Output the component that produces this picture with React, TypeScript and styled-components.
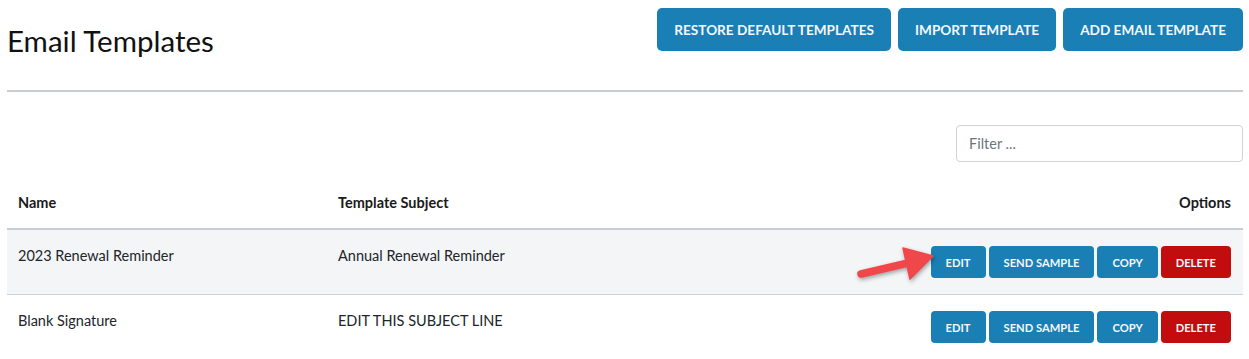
import React, { useState } from "react";
import styled, { createGlobalStyle } from "styled-components";

const GlobalStyle = createGlobalStyle`
  body {
    margin: 0;
    background: #fff;
    font-family: Lato, "Noto Sans", sans-serif;
    color: #212529;
  }
`;

const Page = styled.div`
  padding: 0 6px 0 7px;
`;

const Header = styled.header`
  height: 82px;
  padding-top: 8px;
  display: flex;
  justify-content: space-between;
  align-items: flex-start;
  border-bottom: 2px solid #c9cdd2;
`;

const Title = styled.h1`
  margin: 15px 0 0;
  font-size: 29.5px;
  font-weight: 400;
  line-height: 1.2;
  color: #111;
`;

const Actions = styled.div`
  display: flex;
  gap: 7px;
`;

const Button = styled.button<{ $size?: "lg" | "sm"; $danger?: boolean }>`
  border: 0;
  border-radius: ${(p) => (p.$size === "sm" ? "4px" : "5px")};
  background: ${(p) => (p.$danger ? "#c20d0e" : "#1a7fb5")};
  color: #f4f7fa;
  font-family: Lato, "Noto Sans", sans-serif;
  font-weight: 700;
  text-transform: uppercase;
  cursor: pointer;
  white-space: nowrap;
  height: ${(p) => (p.$size === "sm" ? "32px" : "43px")};
  padding: ${(p) => (p.$size === "sm" ? "0 15px" : "0 17px")};
  font-size: ${(p) => (p.$size === "sm" ? "11.2px" : "13.6px")};
`;

const FilterRow = styled.div`
  display: flex;
  justify-content: flex-end;
  padding: 33px 0 20px;
`;

const FilterInput = styled.input`
  width: 287px;
  height: 37px;
  box-sizing: border-box;
  border: 1px solid #cfd2d6;
  border-radius: 4px;
  padding: 0 12px;
  font-family: Lato, "Noto Sans", sans-serif;
  font-size: 14.5px;
  color: #212529;
  outline: none;
  &::placeholder {
    color: #6c757d;
  }
`;

const Table = styled.table`
  width: 100%;
  border-collapse: collapse;
  table-layout: fixed;
  font-size: 14.5px;
`;

const HeadCell = styled.th<{ $align?: "left" | "right" }>`
  text-align: ${(p) => p.$align ?? "left"};
  font-weight: 700;
  line-height: 20px;
  padding: 11px 12px 15px 11px;
  border-bottom: 2px solid #c9cdd4;
  color: #1a1a1a;
`;

const Row = styled.tr<{ $shaded?: boolean }>`
  background: ${(p) => (p.$shaded ? "#f4f5f7" : "#fff")};
  border-bottom: 1px solid #cdd1d6;
`;

const Cell = styled.td`
  vertical-align: top;
  line-height: 20px;
  padding: 16px 11px 16px;
`;

const OptionsCell = styled.td`
  vertical-align: top;
  text-align: right;
  padding: 16px 12px 16px 11px;
`;

const ButtonGroup = styled.div`
  display: inline-flex;
  gap: 3px;
  position: relative;
`;

const Pointer = styled.svg`
  position: absolute;
  left: -77px;
  top: -3px;
  width: 85px;
  height: 45px;
  overflow: visible;
  filter: drop-shadow(1px 2px 2px rgba(0, 0, 0, 0.35));
  pointer-events: none;
`;

const Arrow = () => (
  <Pointer viewBox="0 0 85 45">
    <line x1="7" y1="31" x2="54" y2="20" stroke="#f0474b" strokeWidth="7.5" strokeLinecap="round" />
    <polygon points="79,13 49,5 56,36" fill="#f0474b" strokeLinejoin="round" stroke="#f0474b" strokeWidth="1.5" />
  </Pointer>
);

type Template = { name: string; subject: string };

const templates: Template[] = [
  { name: "2023 Renewal Reminder", subject: "Annual Renewal Reminder" },
  { name: "Blank Signature", subject: "EDIT THIS SUBJECT LINE" },
];

const App = () => {
  const [filter, setFilter] = useState("");
  const rows = templates.filter((t) =>
    t.name.toLowerCase().includes(filter.toLowerCase())
  );

  return (
    <Page>
      <GlobalStyle />
      <Header>
        <Title>Email Templates</Title>
        <Actions>
          <Button>Restore Default Templates</Button>
          <Button>Import Template</Button>
          <Button>Add Email Template</Button>
        </Actions>
      </Header>
      <FilterRow>
        <FilterInput
          placeholder="Filter ..."
          value={filter}
          onChange={(e) => setFilter(e.target.value)}
        />
      </FilterRow>
      <Table>
        <colgroup>
          <col style={{ width: 320 }} />
          <col />
          <col style={{ width: 420 }} />
        </colgroup>
        <thead>
          <tr>
            <HeadCell>Name</HeadCell>
            <HeadCell>Template Subject</HeadCell>
            <HeadCell $align="right">Options</HeadCell>
          </tr>
        </thead>
        <tbody>
          {rows.map((t, i) => (
            <Row key={t.name} $shaded={i === 0}>
              <Cell>{t.name}</Cell>
              <Cell>{t.subject}</Cell>
              <OptionsCell>
                <ButtonGroup>
                  {i === 0 && <Arrow />}
                  <Button $size="sm">Edit</Button>
                  <Button $size="sm">Send Sample</Button>
                  <Button $size="sm">Copy</Button>
                  <Button $size="sm" $danger>
                    Delete
                  </Button>
                </ButtonGroup>
              </OptionsCell>
            </Row>
          ))}
        </tbody>
      </Table>
    </Page>
  );
};

export default App;
